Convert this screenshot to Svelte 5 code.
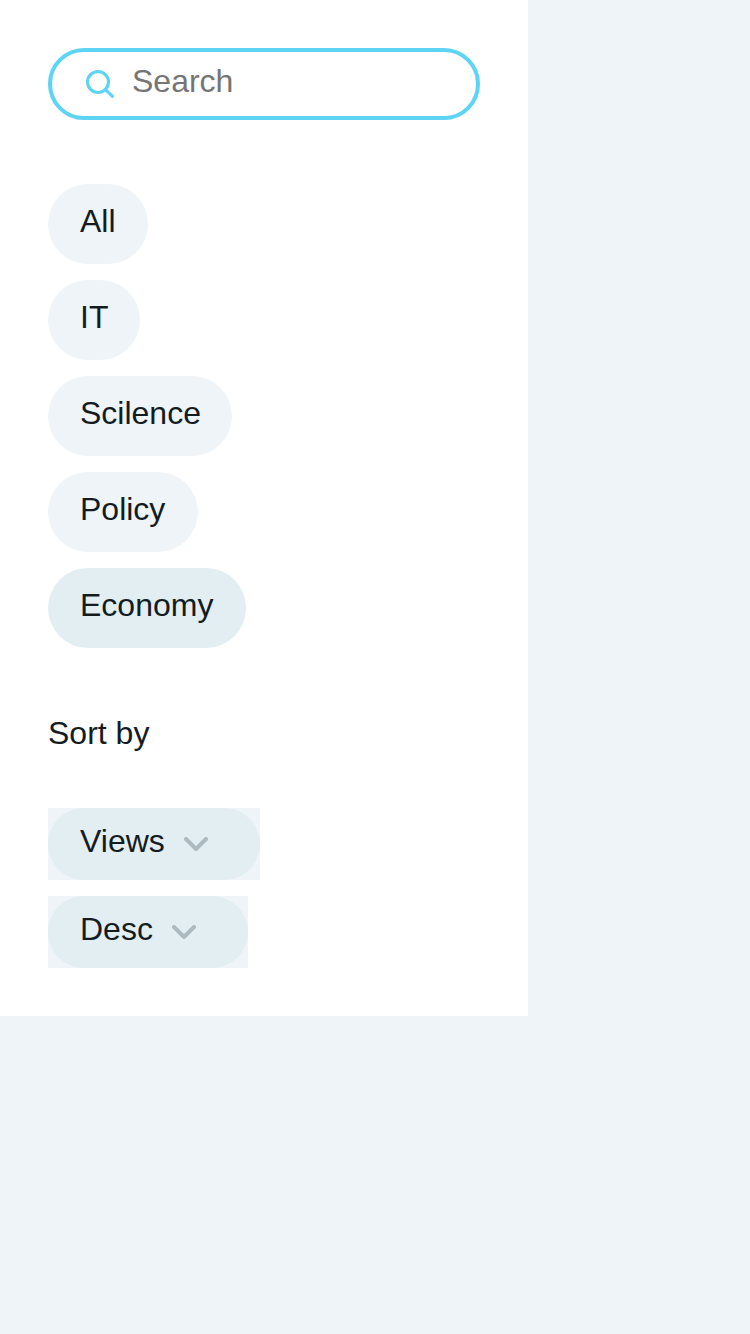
<script>
  const categories = [
    { label: 'All', width: 100 },
    { label: 'IT', width: 92 },
    { label: 'Scilence', width: 184 },
    { label: 'Policy', width: 150 },
    { label: 'Economy', width: 198 }
  ];
  const sorts = [
    { label: 'Views', width: 212 },
    { label: 'Desc', width: 200 }
  ];
  let active = $state('Economy');
</script>

<aside class="panel">
  <label class="search">
    <svg class="glass" width="32" height="32" viewBox="0 0 32 32" fill="none" aria-hidden="true">
      <circle cx="14" cy="14" r="10.5" />
      <path d="M21.6 21.6L28.4 28.4" />
    </svg>
    <input type="text" placeholder="Search" />
  </label>

  <div class="chips">
    {#each categories as category}
      <button
        class="chip"
        class:active={active === category.label}
        style="width: {category.width}px"
        onclick={() => (active = category.label)}>{category.label}</button>
    {/each}
  </div>

  <div class="title">Sort by</div>

  <div class="sorts">
    {#each sorts as sort}
      <div class="sort" style="width: {sort.width}px">
        <button class="select">
          <span>{sort.label}</span>
          <svg width="24" height="14" viewBox="0 0 24 14" fill="none" aria-hidden="true">
            <path d="M2 2L12 12L22 2" />
          </svg>
        </button>
      </div>
    {/each}
  </div>
</aside>

<style>
  :global(body) {
    margin: 0;
    background: #eef4f7;
  }

  .panel {
    box-sizing: border-box;
    width: 528px;
    padding: 48px;
    background: #fff;
    color: #141c1f;
    font: 32px/36px "Liberation Sans", Arial, sans-serif;
  }

  .search {
    box-sizing: border-box;
    display: flex;
    align-items: flex-start;
    height: 72px;
    padding: 11px 28px 0 32px;
    border: 4px solid #5dd4f4;
    border-radius: 36px;
  }

  .glass {
    flex: none;
    margin: 5px 16px 0 0;
    stroke: #5dd4f4;
    stroke-width: 3.1;
    stroke-linecap: round;
  }

  input {
    flex: 1;
    min-width: 0;
    height: 36px;
    padding: 0;
    border: 0;
    outline: 0;
    background: transparent;
    font: inherit;
    color: inherit;
  }

  input::placeholder {
    color: #757575;
  }

  button {
    box-sizing: border-box;
    border: 0;
    font: inherit;
    color: inherit;
    text-align: left;
    cursor: pointer;
  }

  .chips {
    display: flex;
    flex-direction: column;
    align-items: flex-start;
    gap: 16px;
    margin-top: 64px;
  }

  .chip {
    height: 80px;
    padding: 19px 0 25px 32px;
    border-radius: 40px;
    background: #eef4f7;
    white-space: nowrap;
  }

  .chip.active {
    background: #e2eef2;
  }

  .title {
    margin: 67px 0 57px;
  }

  .sorts {
    display: flex;
    flex-direction: column;
    gap: 16px;
  }

  .sort {
    height: 72px;
    background: #eef4f7;
  }

  .select {
    display: flex;
    align-items: flex-start;
    justify-content: space-between;
    width: 100%;
    height: 72px;
    padding: 15px 52px 21px 32px;
    border-radius: 36px;
    background: #e2eef2;
  }

  .select svg {
    flex: none;
    margin-top: 14px;
    stroke: #adbbc0;
    stroke-width: 4;
    stroke-linecap: round;
    stroke-linejoin: round;
  }
</style>
